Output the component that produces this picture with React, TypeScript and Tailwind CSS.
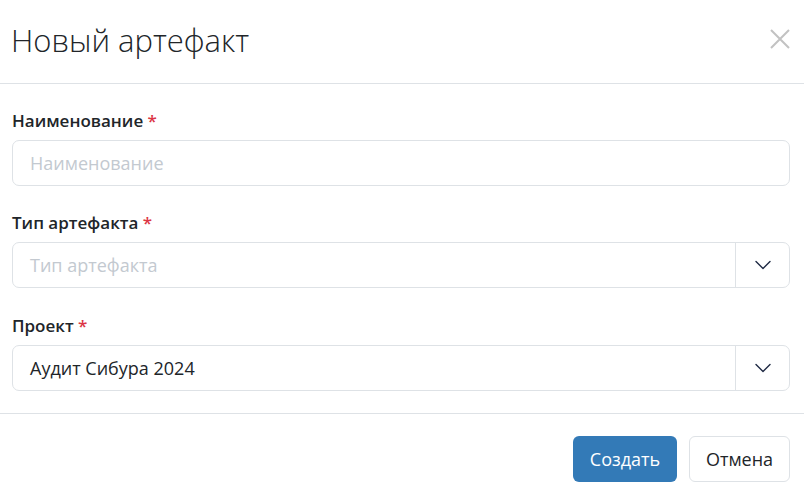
import { ChevronDown } from "lucide-react";

const font = { fontFamily: '"Open Sans", "Noto Sans", sans-serif' };

function Label({ text }: { text: string }) {
  return (
    <div className="mb-[7px] h-6 text-[17px] font-semibold leading-6 text-[#212529]">
      {text} <span className="text-[#dc3545]">*</span>
    </div>
  );
}

function Select({ value, placeholder }: { value?: string; placeholder: string }) {
  return (
    <div className="flex h-[46px] items-stretch rounded-[7px] border border-[#dee2e6] bg-white">
      <div
        className={`flex flex-1 items-center px-[17px] text-[18px] ${value ? "text-[#212529]" : "text-[#c3c9d0]"}`}
      >
        {value ?? placeholder}
      </div>
      <div className="flex w-[54px] items-center justify-center border-l border-[#dee2e6]">
        <ChevronDown size={28} strokeWidth={1.2} className="text-[#1f2a44]" />
      </div>
    </div>
  );
}

export default function App() {
  return (
    <div className="h-[494px] w-[804px] overflow-hidden bg-white" style={font}>
      <div className="flex h-[84px] items-center justify-between border-b border-[#dee2e6] pl-[11px] pr-[13px]">
        <h1 className="pb-[2px] text-[31px] font-light text-[#212529]">Новый артефакт</h1>
        <svg width="22" height="22" viewBox="0 0 22 22" className="mb-[5px] text-[#c2c2c2]">
          <path d="M2 2 L20 20 M20 2 L2 20" stroke="currentColor" strokeWidth="2" fill="none" />
        </svg>
      </div>
      <div className="flex flex-col border-b border-[#dee2e6] pb-[22px] pl-[12px] pr-[14px] pt-[25px]">
        <div>
          <Label text="Наименование" />
          <div className="flex h-[46px] items-center rounded-[7px] border border-[#dee2e6] px-[17px] text-[18px] text-[#c3c9d0]">
            Наименование
          </div>
        </div>
        <div className="mt-[25px]">
          <Label text="Тип артефакта" />
          <Select placeholder="Тип артефакта" />
        </div>
        <div className="mt-[26px]">
          <Label text="Проект" />
          <Select placeholder="Проект" value="Аудит Сибура 2024" />
        </div>
      </div>
      <div className="flex justify-end gap-[12px] pr-[14px] pt-[22px]">
        <button className="h-[46px] w-[104px] rounded-[6px] bg-[#337ab7] text-[18px] text-white">
          Создать
        </button>
        <button className="h-[46px] w-[101px] rounded-[6px] border border-[#dee2e6] bg-white text-[18px] text-[#212529]">
          Отмена
        </button>
      </div>
    </div>
  );
}
